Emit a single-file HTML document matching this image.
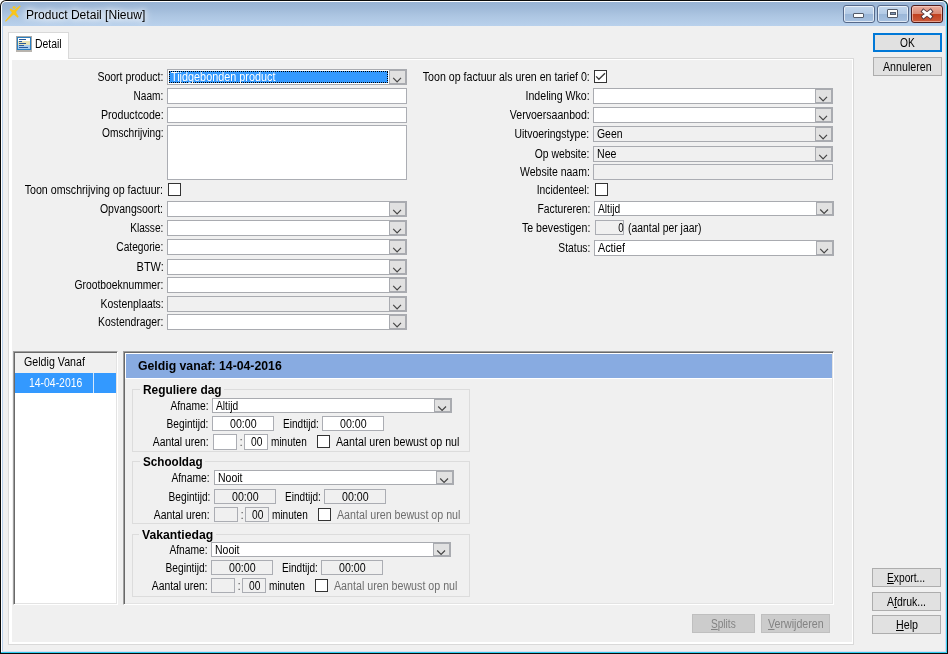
<!DOCTYPE html>
<html><head><meta charset="utf-8"><title>Product Detail [Nieuw]</title>
<style>
*{box-sizing:border-box}
html,body{margin:0;padding:0}
body{width:948px;height:654px;position:relative;overflow:hidden;background:#fff;font:12px "Liberation Sans",sans-serif;color:#000}
#f0{position:absolute;left:0;top:0;width:948px;height:654px;background:#0a0a0a;border-radius:6px 6px 0 0}
#f1{position:absolute;left:1px;top:1px;width:946px;height:652px;border-radius:5px 5px 0 0;background:#fff;border-right:1px solid #3fd0f2;border-bottom:1px solid #2fcdf0}
#f2{position:absolute;left:2px;top:2px;width:944px;height:650px;border-radius:4px 4px 0 0;background:linear-gradient(#98b3d4 0px,#9fb9d8 6px,#adc6e2 14px,#b9d1ec 24px,#b9d1ec 100%);border-right:1px solid #d6d9ee;border-bottom:1px solid #d8dbef}
#dlg{position:absolute;left:3px;top:26px;width:942px;height:625px;background:#f0f0f0}
.t{filter:grayscale(1);position:absolute;white-space:nowrap;height:16px;line-height:16px;transform-origin:0 0}
.t.r{transform-origin:100% 0}
.t u{text-decoration:underline;text-underline-offset:1px}
.ttl{text-shadow:0 0 5px #fff,0 0 8px #fff,0 0 10px rgba(255,255,255,.8)}
.wb{position:absolute;top:5px;width:32px;height:18px;border:1px solid #56698a;border-radius:3px;background:linear-gradient(#c3d6ec 0,#b4cbe6 48%,#9ab6d8 52%,#a7c1e0 100%);box-shadow:inset 0 0 0 1px rgba(255,255,255,.65)}
.wb.cl{border-color:#4e1a1a;background:linear-gradient(#e9ad9f 0,#d98974 48%,#c1401f 52%,#cd5b3b 100%);box-shadow:inset 0 0 0 1px rgba(255,220,210,.55)}
.wb b{position:absolute;background:#fdfdfd;border:1px solid #535b6a;border-radius:1px}
.wb em{position:absolute;background:#7f97b6;border:1px solid #535b6a}
#page{position:absolute;left:8px;top:58px;width:846px;height:587px;border:1px solid #d9d9d9;background:#fff}
#pagein{position:absolute;left:3px;top:1px;width:840px;height:582px;background:#f0f0f0}
#tab{position:absolute;left:8px;top:32px;width:61px;height:27px;border:1px solid #d9d9d9;border-bottom:0;background:#fff}
.cb{position:absolute;border:1px solid #a9abb0}
.cb i{position:absolute;right:0;top:0;width:17px;border:1px solid #a9abb0;background:#e1e1e1;display:block}
.cb svg{display:block}
.sel{position:absolute;background:#3399ff;border:1px dotted #000}
.in{position:absolute;border:1px solid #abadb3}
.ck{position:absolute;width:13px;height:13px;border:1px solid #333;background:#fff}
.bt{position:absolute;border:1px solid #adadad;background:#e1e1e1}
.bt.def{border:2px solid #0078d7}
.bt.dis{border-color:#bfbfbf;background:#cccccc}
.sunk{position:absolute;border:1px solid;border-color:#a0a0a0 #fff #fff #a0a0a0;box-shadow:inset 1px 1px 0 #696969,inset -1px -1px 0 #e3e3e3}
.gb{position:absolute;border:1px solid #dcdcdc}
</style></head>
<body>
<div id="f0"></div><div id="f1"></div><div id="f2"></div><div id="dlg"></div>
<svg style="position:absolute;left:0;top:0" width="26" height="26" viewBox="0 0 26 26"><g fill="#f8c51b"><path d="M14.9 13.3 L13.0 11.4 L5.0 20.9 L5.8 21.7Z"/><path d="M15.1 13.3 L12.9 11.1 L19.9 5.4 L20.7 6.2Z"/><path d="M15.2 11.0 L12.9 13.6 L9.6 9.8 L10.6 8.5Z"/><path d="M15.3 11.2 L12.8 13.4 L17.6 17.7 L18.7 16.7Z"/><circle cx="14" cy="12.3" r="2.1"/><ellipse cx="14.1" cy="7.5" rx="1.55" ry="1.25"/></g></svg>
<div class="wb" style="left:843px"><b style="left:9px;top:7px;width:11px;height:5px"></b></div>
<div class="wb" style="left:877px"><b style="left:9px;top:3px;width:11px;height:9px"></b><em style="left:12px;top:6px;width:6px;height:3px"></em></div>
<div class="wb cl" style="left:911px"><svg width="32" height="18" viewBox="0 0 32 18" style="position:absolute;left:-1px;top:-1px"><path d="M12.6 6.4 L19.4 11.6 M19.4 6.4 L12.6 11.6" stroke="#53343a" stroke-width="4.4" stroke-linecap="square" fill="none"/><path d="M12.6 6.4 L19.4 11.6 M19.4 6.4 L12.6 11.6" stroke="#fff" stroke-width="2.6" stroke-linecap="square" fill="none"/></svg></div>
<div id="page"><div id="pagein"></div></div>
<div id="tab"></div>
<svg style="position:absolute;left:16px;top:36px" width="16" height="16" viewBox="0 0 16 16"><rect x="0" y="0" width="16" height="16" fill="#a9a9a9"/><rect x="0" y="14" width="16" height="2" fill="#b8b4ae"/><rect x="1" y="1" width="14" height="13" fill="#2a7fc0"/><rect x="2" y="2" width="12" height="11" fill="#fff"/><rect x="2" y="5" width="12" height="4" fill="#e8e4b8"/><rect x="2" y="9" width="12" height="4" fill="#a8cdf0"/><g fill="#2a5a9a"><rect x="3" y="3" width="7" height="1"/><rect x="3" y="5" width="3" height="1"/><rect x="3" y="7" width="7" height="1"/><rect x="3" y="9" width="5" height="1"/><rect x="3" y="11" width="9" height="1"/></g></svg>
<div class="bt def" style="left:873px;top:33px;width:69px;height:19px"></div>
<div class="bt" style="left:873px;top:57px;width:69px;height:19px"></div>
<div class="bt" style="left:872px;top:568px;width:69px;height:19px"></div>
<div class="bt" style="left:872px;top:592px;width:69px;height:19px"></div>
<div class="bt" style="left:872px;top:615px;width:69px;height:19px"></div>
<div class="bt dis" style="left:692px;top:614px;width:63px;height:19px"></div>
<div class="bt dis" style="left:761px;top:614px;width:69px;height:19px"></div>
<div class="cb" style="left:167px;top:69px;width:240px;height:16px;background:#fff"><i style="height:14px"><svg width="15" height="12" viewBox="0 0 15 12"><path d="M3.2 6.9 L7.1 10.8 L11 6.9" fill="none" stroke="#454545" stroke-width="1.2"/></svg></i></div>
<div class="sel" style="left:169px;top:71px;width:219px;height:12px"></div>
<div class="in" style="left:167px;top:88px;width:240px;height:16px;background:#fff"></div>
<div class="in" style="left:167px;top:107px;width:240px;height:16px;background:#fff"></div>
<div class="in" style="left:167px;top:125px;width:240px;height:55px;background:#fff"></div>
<div class="ck" style="left:168px;top:183px"></div>
<div class="cb" style="left:167px;top:201px;width:240px;height:16px;background:#fff"><i style="height:14px"><svg width="15" height="12" viewBox="0 0 15 12"><path d="M3.2 6.9 L7.1 10.8 L11 6.9" fill="none" stroke="#454545" stroke-width="1.2"/></svg></i></div>
<div class="cb" style="left:167px;top:220px;width:240px;height:16px;background:#fff"><i style="height:14px"><svg width="15" height="12" viewBox="0 0 15 12"><path d="M3.2 6.9 L7.1 10.8 L11 6.9" fill="none" stroke="#454545" stroke-width="1.2"/></svg></i></div>
<div class="cb" style="left:167px;top:239px;width:240px;height:16px;background:#fff"><i style="height:14px"><svg width="15" height="12" viewBox="0 0 15 12"><path d="M3.2 6.9 L7.1 10.8 L11 6.9" fill="none" stroke="#454545" stroke-width="1.2"/></svg></i></div>
<div class="cb" style="left:167px;top:259px;width:240px;height:16px;background:#fff"><i style="height:14px"><svg width="15" height="12" viewBox="0 0 15 12"><path d="M3.2 6.9 L7.1 10.8 L11 6.9" fill="none" stroke="#454545" stroke-width="1.2"/></svg></i></div>
<div class="cb" style="left:167px;top:277px;width:240px;height:16px;background:#fff"><i style="height:14px"><svg width="15" height="12" viewBox="0 0 15 12"><path d="M3.2 6.9 L7.1 10.8 L11 6.9" fill="none" stroke="#454545" stroke-width="1.2"/></svg></i></div>
<div class="cb" style="left:167px;top:296px;width:240px;height:16px;background:#f0f0f0"><i style="height:14px"><svg width="15" height="12" viewBox="0 0 15 12"><path d="M3.2 6.9 L7.1 10.8 L11 6.9" fill="none" stroke="#454545" stroke-width="1.2"/></svg></i></div>
<div class="cb" style="left:167px;top:314px;width:240px;height:16px;background:#fff"><i style="height:14px"><svg width="15" height="12" viewBox="0 0 15 12"><path d="M3.2 6.9 L7.1 10.8 L11 6.9" fill="none" stroke="#454545" stroke-width="1.2"/></svg></i></div>
<div class="ck" style="left:594px;top:70px"><svg width="11" height="11" viewBox="0 0 11 11" style="position:absolute;left:0;top:0"><path d="M1.1 5.4 L3.9 8.3 L10 2.3" fill="none" stroke="#383838" stroke-width="1.3"/></svg></div>
<div class="cb" style="left:593px;top:88px;width:240px;height:16px;background:#fff"><i style="height:14px"><svg width="15" height="12" viewBox="0 0 15 12"><path d="M3.2 6.9 L7.1 10.8 L11 6.9" fill="none" stroke="#454545" stroke-width="1.2"/></svg></i></div>
<div class="cb" style="left:593px;top:107px;width:240px;height:16px;background:#fff"><i style="height:14px"><svg width="15" height="12" viewBox="0 0 15 12"><path d="M3.2 6.9 L7.1 10.8 L11 6.9" fill="none" stroke="#454545" stroke-width="1.2"/></svg></i></div>
<div class="cb" style="left:593px;top:126px;width:240px;height:16px;background:#f0f0f0"><i style="height:14px"><svg width="15" height="12" viewBox="0 0 15 12"><path d="M3.2 6.9 L7.1 10.8 L11 6.9" fill="none" stroke="#454545" stroke-width="1.2"/></svg></i></div>
<div class="cb" style="left:593px;top:146px;width:240px;height:16px;background:#f0f0f0"><i style="height:14px"><svg width="15" height="12" viewBox="0 0 15 12"><path d="M3.2 6.9 L7.1 10.8 L11 6.9" fill="none" stroke="#454545" stroke-width="1.2"/></svg></i></div>
<div class="in" style="left:593px;top:164px;width:240px;height:16px;background:#f0f0f0"></div>
<div class="ck" style="left:595px;top:183px"></div>
<div class="cb" style="left:594px;top:201px;width:240px;height:15px;background:#fff"><i style="height:13px"><svg width="15" height="11" viewBox="0 0 15 11"><path d="M3.2 6.5 L7.1 10.4 L11 6.5" fill="none" stroke="#454545" stroke-width="1.2"/></svg></i></div>
<div class="in" style="left:595px;top:220px;width:29px;height:15px;background:#f0f0f0"></div>
<div class="cb" style="left:594px;top:240px;width:240px;height:16px;background:#fff"><i style="height:14px"><svg width="15" height="12" viewBox="0 0 15 12"><path d="M3.2 6.9 L7.1 10.8 L11 6.9" fill="none" stroke="#454545" stroke-width="1.2"/></svg></i></div>
<div class="sunk" style="left:13px;top:351px;width:105px;height:254px;background:#fff"></div>
<div style="position:absolute;left:15px;top:353px;width:101px;height:20px;background:#f0f0f0"></div>
<div style="position:absolute;left:15px;top:373px;width:101px;height:20px;background:#3399ff"></div>
<div style="position:absolute;left:93px;top:373px;width:1px;height:20px;background:#d6e8fb"></div>
<div class="sunk" style="left:123px;top:351px;width:711px;height:254px;background:#f0f0f0"></div>
<div style="position:absolute;left:125px;top:353px;width:707px;height:26px;background:#fff"></div>
<div style="position:absolute;left:126px;top:354px;width:706px;height:24px;background:#88abe1"></div>
<div class="gb" style="left:132px;top:389px;width:338px;height:63px"></div>
<div style="position:absolute;left:139.7px;top:387px;width:84.6px;height:5px;background:#f0f0f0"></div>
<div class="cb" style="left:212px;top:398px;width:240px;height:15px;background:#fff"><i style="height:13px"><svg width="15" height="11" viewBox="0 0 15 11"><path d="M3.2 6.5 L7.1 10.4 L11 6.5" fill="none" stroke="#454545" stroke-width="1.2"/></svg></i></div>
<div class="in" style="left:212px;top:416px;width:62px;height:15px;background:#fff"></div>
<div class="in" style="left:322px;top:416px;width:62px;height:15px;background:#fff"></div>
<div class="in" style="left:213px;top:434px;width:24px;height:16px;background:#fff"></div>
<div class="in" style="left:244px;top:434px;width:24px;height:16px;background:#fff"></div>
<div class="ck" style="left:317px;top:435px"></div>
<div class="gb" style="left:132px;top:461px;width:338px;height:63px"></div>
<div style="position:absolute;left:139.7px;top:459px;width:65.6px;height:5px;background:#f0f0f0"></div>
<div class="cb" style="left:214px;top:470px;width:240px;height:15px;background:#fff"><i style="height:13px"><svg width="15" height="11" viewBox="0 0 15 11"><path d="M3.2 6.5 L7.1 10.4 L11 6.5" fill="none" stroke="#454545" stroke-width="1.2"/></svg></i></div>
<div class="in" style="left:214px;top:489px;width:62px;height:15px;background:#f0f0f0"></div>
<div class="in" style="left:324px;top:489px;width:62px;height:15px;background:#f0f0f0"></div>
<div class="in" style="left:214px;top:507px;width:24px;height:15px;background:#f0f0f0"></div>
<div class="in" style="left:245px;top:507px;width:24px;height:15px;background:#f0f0f0"></div>
<div class="ck" style="left:318px;top:508px"></div>
<div class="gb" style="left:132px;top:534px;width:338px;height:63px"></div>
<div style="position:absolute;left:139.1px;top:532px;width:77.2px;height:5px;background:#f0f0f0"></div>
<div class="cb" style="left:211px;top:542px;width:240px;height:15px;background:#fff"><i style="height:13px"><svg width="15" height="11" viewBox="0 0 15 11"><path d="M3.2 6.5 L7.1 10.4 L11 6.5" fill="none" stroke="#454545" stroke-width="1.2"/></svg></i></div>
<div class="in" style="left:211px;top:560px;width:62px;height:15px;background:#f0f0f0"></div>
<div class="in" style="left:321px;top:560px;width:62px;height:15px;background:#f0f0f0"></div>
<div class="in" style="left:211px;top:578px;width:24px;height:15px;background:#f0f0f0"></div>
<div class="in" style="left:242px;top:578px;width:24px;height:15px;background:#f0f0f0"></div>
<div class="ck" style="left:315px;top:579px"></div>
<span class="t ttl" style="top:6.5px;left:25.5px;transform:scaleX(1.0049)">Product Detail [Nieuw]</span>
<span class="t" style="top:36px;left:34.7px;transform:scaleX(0.8668)">Detail</span>
<span class="t" style="top:35px;left:900.15px;transform:scaleX(0.8476)">OK</span>
<span class="t" style="top:59px;left:883.2px;transform:scaleX(0.8882)">Annuleren</span>
<span class="t" style="top:570px;left:887.45px;transform:scaleX(0.8526)"><u>E</u>xport...</span>
<span class="t" style="top:594px;left:887.0px;transform:scaleX(0.8727)">A<u>f</u>druk...</span>
<span class="t" style="top:617px;left:895.5px;transform:scaleX(0.8911)"><u>H</u>elp</span>
<span class="t" style="top:616px;left:711.15px;transform:scaleX(0.8417);color:#838383"><u>S</u>plits</span>
<span class="t" style="top:616px;left:767.7px;transform:scaleX(0.8867);color:#838383"><u>V</u>erwijderen</span>
<span class="t r" style="top:69px;right:784.7px;transform:scaleX(0.8756)">Soort product:</span>
<span class="t r" style="top:88px;right:784.7px;transform:scaleX(0.8431)">Naam:</span>
<span class="t r" style="top:107px;right:784.7px;transform:scaleX(0.8880)">Productcode:</span>
<span class="t r" style="top:125px;right:784.7px;transform:scaleX(0.8488)">Omschrijving:</span>
<span class="t r" style="top:182px;right:784.7px;transform:scaleX(0.8867)">Toon omschrijving op factuur:</span>
<span class="t r" style="top:201px;right:784.7px;transform:scaleX(0.8758)">Opvangsoort:</span>
<span class="t r" style="top:220px;right:784.7px;transform:scaleX(0.8435)">Klasse:</span>
<span class="t r" style="top:239px;right:784.7px;transform:scaleX(0.8506)">Categorie:</span>
<span class="t r" style="top:259px;right:784.7px;transform:scaleX(0.9133)">BTW:</span>
<span class="t r" style="top:277px;right:784.7px;transform:scaleX(0.8589)">Grootboeknummer:</span>
<span class="t r" style="top:296px;right:784.7px;transform:scaleX(0.8677)">Kostenplaats:</span>
<span class="t r" style="top:314px;right:784.7px;transform:scaleX(0.8662)">Kostendrager:</span>
<span class="t" style="top:69px;left:170.5px;transform:scaleX(0.9028);color:#fff">Tijdgebonden product</span>
<span class="t r" style="top:69px;right:358.6px;transform:scaleX(0.8845)">Toon op factuur als uren en tarief 0:</span>
<span class="t r" style="top:88px;right:358.6px;transform:scaleX(0.8830)">Indeling Wko:</span>
<span class="t r" style="top:107px;right:358.6px;transform:scaleX(0.8806)">Vervoersaanbod:</span>
<span class="t r" style="top:126px;right:358.6px;transform:scaleX(0.8658)">Uitvoeringstype:</span>
<span class="t r" style="top:146px;right:358.6px;transform:scaleX(0.8615)">Op website:</span>
<span class="t r" style="top:164px;right:358.6px;transform:scaleX(0.8744)">Website naam:</span>
<span class="t r" style="top:182px;right:358.6px;transform:scaleX(0.8584)">Incidenteel:</span>
<span class="t r" style="top:201px;right:357.4px;transform:scaleX(0.8621)">Factureren:</span>
<span class="t r" style="top:220px;right:357.4px;transform:scaleX(0.8851)">Te bevestigen:</span>
<span class="t r" style="top:240px;right:357.4px;transform:scaleX(0.8565)">Status:</span>
<span class="t" style="top:126px;left:596.5px;transform:scaleX(0.8685)">Geen</span>
<span class="t" style="top:146px;left:596.5px;transform:scaleX(0.8857)">Nee</span>
<span class="t" style="top:200.5px;left:597.5px;transform:scaleX(0.8533)">Altijd</span>
<span class="t r" style="top:219.6px;right:324.70000000000005px;transform:scaleX(0.8075)">0</span>
<span class="t" style="top:219.6px;left:627.5px;transform:scaleX(0.8664)">(aantal per jaar)</span>
<span class="t" style="top:240px;left:597.5px;transform:scaleX(0.8995)">Actief</span>
<span class="t" style="top:354px;left:24.4px;transform:scaleX(0.8891)">Geldig Vanaf</span>
<span class="t" style="top:375px;left:29px;transform:scaleX(0.8682);color:#fff">14-04-2016</span>
<span class="t" style="top:358px;left:137.6px;transform:scaleX(1.0211);font-weight:bold">Geldig vanaf: 14-04-2016</span>
<span class="t" style="top:382px;left:142.7px;transform:scaleX(0.9904);font-weight:bold">Reguliere dag</span>
<span class="t r" style="top:397.7px;right:739.5px;transform:scaleX(0.8568)">Afname:</span>
<span class="t" style="top:397.5px;left:215.5px;transform:scaleX(0.8533)">Altijd</span>
<span class="t r" style="top:415.6px;right:739.5px;transform:scaleX(0.8466)">Begintijd:</span>
<span class="t" style="top:415.6px;left:229.7px;transform:scaleX(0.8857)">00:00</span>
<span class="t" style="top:415.6px;left:282.6px;transform:scaleX(0.8383)">Eindtijd:</span>
<span class="t" style="top:415.6px;left:339.7px;transform:scaleX(0.8857)">00:00</span>
<span class="t r" style="top:433.5px;right:739.3px;transform:scaleX(0.8653)">Aantal uren:</span>
<span class="t" style="top:434.3px;left:239.7px;transform:scaleX(0.6579)">:</span>
<span class="t" style="top:433.7px;left:250.9px;transform:scaleX(0.8533)">00</span>
<span class="t" style="top:434px;left:271.2px;transform:scaleX(0.8383)">minuten</span>
<span class="t" style="top:434.3px;left:335.9px;transform:scaleX(0.8893)">Aantal uren bewust op nul</span>
<span class="t" style="top:454px;left:142.7px;transform:scaleX(0.9716);font-weight:bold">Schooldag</span>
<span class="t r" style="top:469.7px;right:738px;transform:scaleX(0.8568)">Afname:</span>
<span class="t" style="top:469.5px;left:217.5px;transform:scaleX(0.8745)">Nooit</span>
<span class="t r" style="top:488.6px;right:738px;transform:scaleX(0.8466)">Begintijd:</span>
<span class="t" style="top:488.6px;left:231.7px;transform:scaleX(0.8857)">00:00</span>
<span class="t" style="top:488.6px;left:284.5px;transform:scaleX(0.8383)">Eindtijd:</span>
<span class="t" style="top:488.6px;left:341.7px;transform:scaleX(0.8857)">00:00</span>
<span class="t r" style="top:506.5px;right:737.8px;transform:scaleX(0.8653)">Aantal uren:</span>
<span class="t" style="top:507.3px;left:240.8px;transform:scaleX(0.6579)">:</span>
<span class="t" style="top:506.7px;left:251.9px;transform:scaleX(0.8533)">00</span>
<span class="t" style="top:507px;left:271.8px;transform:scaleX(0.8383)">minuten</span>
<span class="t" style="top:507.3px;left:337.1px;transform:scaleX(0.8893);color:#6d6d6d">Aantal uren bewust op nul</span>
<span class="t" style="top:527px;left:142.1px;transform:scaleX(1.0167);font-weight:bold">Vakantiedag</span>
<span class="t r" style="top:541.7px;right:740.7px;transform:scaleX(0.8568)">Afname:</span>
<span class="t" style="top:541.5px;left:214.5px;transform:scaleX(0.8745)">Nooit</span>
<span class="t r" style="top:559.6px;right:740.7px;transform:scaleX(0.8466)">Begintijd:</span>
<span class="t" style="top:559.6px;left:228.7px;transform:scaleX(0.8857)">00:00</span>
<span class="t" style="top:559.6px;left:281.6px;transform:scaleX(0.8383)">Eindtijd:</span>
<span class="t" style="top:559.6px;left:338.7px;transform:scaleX(0.8857)">00:00</span>
<span class="t r" style="top:577.5px;right:740.5px;transform:scaleX(0.8653)">Aantal uren:</span>
<span class="t" style="top:578.3px;left:237.9px;transform:scaleX(0.6579)">:</span>
<span class="t" style="top:577.7px;left:248.9px;transform:scaleX(0.8533)">00</span>
<span class="t" style="top:578px;left:268.8px;transform:scaleX(0.8383)">minuten</span>
<span class="t" style="top:578.3px;left:333.9px;transform:scaleX(0.8893);color:#6d6d6d">Aantal uren bewust op nul</span>
</body></html>
